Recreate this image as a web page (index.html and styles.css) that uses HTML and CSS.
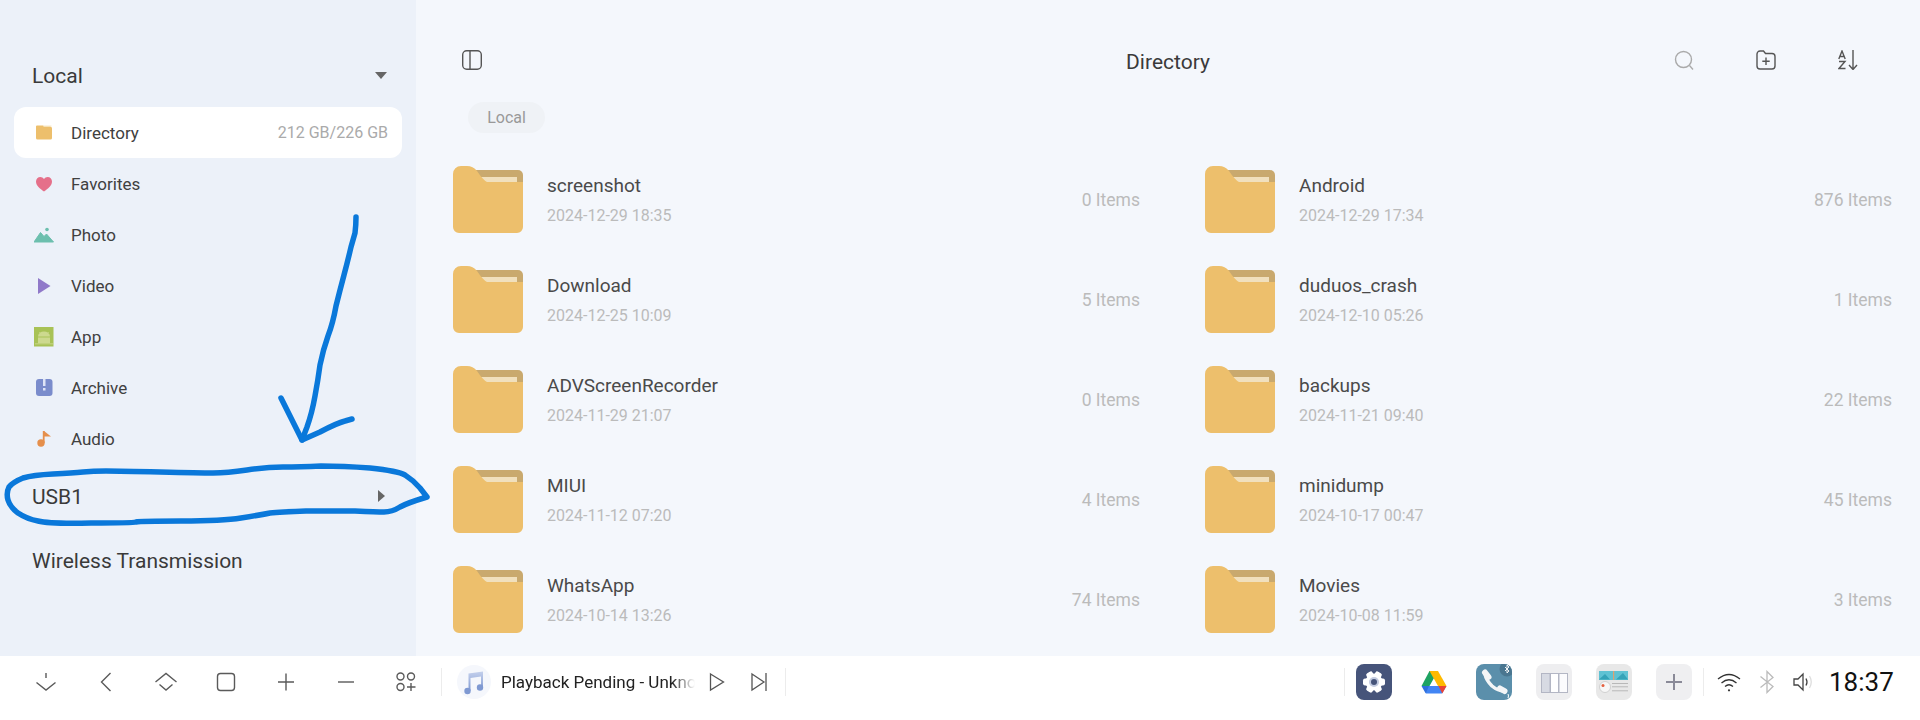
FILE: index.html
```html
<!DOCTYPE html>
<html lang="en">
<head>
<meta charset="utf-8">
<title>Directory</title>
<link rel="stylesheet" href="styles.css">
</head>
<body>
<svg class="defs" width="0" height="0">
  <symbol id="folder" viewBox="0 0 70 67">
    <path d="M15 4H65a5 5 0 0 1 5 5V30H15z" fill="#c9a96e"/>
    <rect x="22" y="11" width="42" height="12" fill="#f1e0bd"/>
    <path d="M0 8a8 8 0 0 1 8-8h6q6 0 10 5q6 9 10 11H70V61a6 6 0 0 1-6 6H6a6 6 0 0 1-6-6z" fill="#edbf6c"/>
  </symbol>
</svg>
<div class="app">
  <div class="content">
    <aside class="sidebar">
      <div class="section"><span>Local</span><i class="tri-down"></i></div>
      <ul class="nav">
        <li class="nav-item active">
          <svg class="nav-icon" viewBox="0 0 20 20"><path d="M2 3.500a1 1 0 0 1 1-1h6l1 1h6a2 2 0 0 1 2 2V15a1.500 1.500 0 0 1-1.500 1.500h-13A1.500 1.500 0 0 1 2 15z" fill="#edbf6c"/><path d="M9 3h8.500" stroke="#f7e3b8" stroke-width=".8"/></svg>
          <span class="nav-label">Directory</span><span class="nav-meta">212 GB/226 GB</span>
        </li>
        <li class="nav-item">
          <svg class="nav-icon" viewBox="0 0 20 20"><path d="M10 17.500C6 14.500 2 11.800 2 7.500C2 5 4 3 6.300 3C7.800 3 9.200 3.700 10 5C10.800 3.700 12.200 3 13.700 3C16 3 18 5 18 7.500C18 11.800 14 14.500 10 17.500z" fill="#e5708a"/></svg>
          <span class="nav-label">Favorites</span>
        </li>
        <li class="nav-item">
          <svg class="nav-icon" viewBox="0 0 20 20"><path d="M0 17L6.500 7.500L10 11.500L12.500 9L19.500 17z" fill="#6cbfae" stroke="#6cbfae" stroke-linejoin="round"/><circle cx="13" cy="4.500" r="1.800" fill="#6cbfae"/></svg>
          <span class="nav-label">Photo</span>
        </li>
        <li class="nav-item">
          <svg class="nav-icon" viewBox="0 0 20 20"><path d="M4 2L16.500 10L4 18z" fill="#9079c9"/></svg>
          <span class="nav-label">Video</span>
        </li>
        <li class="nav-item">
          <svg class="nav-icon" viewBox="0 0 20 20"><rect width="19.500" height="19.500" fill="#a8c256"/><path d="M4 9.500a6 5 0 0 1 12 0z" fill="#cdd98f"/><rect x="4" y="10.500" width="12" height="6" fill="#cdd98f"/><path d="M1 16.800H19" stroke="#c4d380" stroke-width="1.200"/><path d="M5.500 5L7 7M14.500 5L13 7" stroke="#cdd98f"/></svg>
          <span class="nav-label">App</span>
        </li>
        <li class="nav-item">
          <svg class="nav-icon" viewBox="0 0 20 20"><rect x="2" y="1" width="16.500" height="17" rx="3" fill="#7a8ccc"/><rect x="9" y="1" width="2.500" height="7" fill="#dfe5f7"/><rect x="9" y="10" width="2.500" height="2.500" fill="#dfe5f7"/></svg>
          <span class="nav-label">Archive</span>
        </li>
        <li class="nav-item">
          <svg class="nav-icon" viewBox="0 0 20 20"><circle cx="7" cy="14" r="3.700" fill="#e58f4c"/><rect x="8.800" y="2" width="1.800" height="12" fill="#e58f4c"/><path d="M10 2L17 7.500H10z" fill="#e58f4c"/></svg>
          <span class="nav-label">Audio</span>
        </li>
      </ul>
      <div class="section"><span>USB1</span><i class="tri-right"></i></div>
      <div class="section"><span>Wireless Transmission</span></div>
    </aside>
    <main class="main">
      <header class="topbar">
        <svg class="tool" viewBox="0 0 20 20" fill="none" stroke="#555" stroke-width="1.400"><rect x=".7" y=".7" width="18.600" height="18.600" rx="4"/><path d="M8 1V19"/></svg>
        <h1 class="title">Directory</h1>
        <div class="tools">
          <svg class="tool" viewBox="0 0 20 20" fill="none" stroke="#aaa" stroke-width="1.400"><circle cx="9.500" cy="9.500" r="8"/><path d="M15.500 15.500L19 19.500"/></svg>
          <svg class="tool" viewBox="0 0 20 20" fill="none" stroke="#555" stroke-width="1.400"><path d="M1 4a3 3 0 0 1 3-3h3.500l2 2.500H16a3 3 0 0 1 3 3V16a3 3 0 0 1-3 3H4a3 3 0 0 1-3-3z"/><path d="M10 7.500V15M6.300 11.200H13.700"/></svg>
          <svg class="tool" viewBox="0 0 20 20" fill="none" stroke="#555" stroke-width="1.400"><path d="M.8 9L4 1L7.200 9M2 6.500H6"/><path d="M1 11.500H7L1 18.500H7.500"/><path d="M15 0V19M11 15L15 19.500L19 15"/></svg>
        </div>
      </header>
      <div class="crumb">Local</div>
      <section class="files">
        <article class="file"><svg class="file-icon"><use href="#folder"/></svg><div class="file-text"><div class="file-name">screenshot</div><div class="file-date">2024-12-29 18:35</div></div><div class="file-count">0 Items</div></article>
        <article class="file"><svg class="file-icon"><use href="#folder"/></svg><div class="file-text"><div class="file-name">Android</div><div class="file-date">2024-12-29 17:34</div></div><div class="file-count">876 Items</div></article>
        <article class="file"><svg class="file-icon"><use href="#folder"/></svg><div class="file-text"><div class="file-name">Download</div><div class="file-date">2024-12-25 10:09</div></div><div class="file-count">5 Items</div></article>
        <article class="file"><svg class="file-icon"><use href="#folder"/></svg><div class="file-text"><div class="file-name">duduos_crash</div><div class="file-date">2024-12-10 05:26</div></div><div class="file-count">1 Items</div></article>
        <article class="file"><svg class="file-icon"><use href="#folder"/></svg><div class="file-text"><div class="file-name">ADVScreenRecorder</div><div class="file-date">2024-11-29 21:07</div></div><div class="file-count">0 Items</div></article>
        <article class="file"><svg class="file-icon"><use href="#folder"/></svg><div class="file-text"><div class="file-name">backups</div><div class="file-date">2024-11-21 09:40</div></div><div class="file-count">22 Items</div></article>
        <article class="file"><svg class="file-icon"><use href="#folder"/></svg><div class="file-text"><div class="file-name">MIUI</div><div class="file-date">2024-11-12 07:20</div></div><div class="file-count">4 Items</div></article>
        <article class="file"><svg class="file-icon"><use href="#folder"/></svg><div class="file-text"><div class="file-name">minidump</div><div class="file-date">2024-10-17 00:47</div></div><div class="file-count">45 Items</div></article>
        <article class="file"><svg class="file-icon"><use href="#folder"/></svg><div class="file-text"><div class="file-name">WhatsApp</div><div class="file-date">2024-10-14 13:26</div></div><div class="file-count">74 Items</div></article>
        <article class="file"><svg class="file-icon"><use href="#folder"/></svg><div class="file-text"><div class="file-name">Movies</div><div class="file-date">2024-10-08 11:59</div></div><div class="file-count">3 Items</div></article>
      </section>
    </main>
  </div>
  <footer class="dock">
    <div class="nav-keys">
      <svg class="key" viewBox="0 0 20 20"><path d="M10 1V6M.5 10.500L10 18L19.500 10.500"/></svg>
      <svg class="key" viewBox="0 0 20 20"><path d="M14.500 1L5.500 10L14.500 19"/></svg>
      <svg class="key key-wide" viewBox="0 -1 22 20"><path d="M.5 9L11 .5L21.500 9M4.500 11.500L11 17L17.500 11.500"/></svg>
      <svg class="key" viewBox="0 0 20 20"><rect x="1.500" y="1.500" width="17" height="17" rx="3"/></svg>
      <svg class="key" viewBox="0 0 20 20"><path d="M10 1.500V18.500M2 10H18"/></svg>
      <svg class="key" viewBox="0 0 20 20"><path d="M2 10H18"/></svg>
      <svg class="key" viewBox="0 0 20 20"><circle cx="4.500" cy="4.500" r="3.500"/><circle cx="15" cy="4.500" r="3.500"/><circle cx="4.500" cy="15" r="3.500"/><path d="M15 11V19M11 15H19.500"/></svg>
    </div>
    <span class="sep sep-a"></span>
    <div class="player">
      <span class="cover"><svg viewBox="0 0 34 34" width="34" height="34"><defs><linearGradient id="note" x1="0" y1="0" x2="0" y2="1"><stop offset="0" stop-color="#c4d0ec"/><stop offset="1" stop-color="#7f99d2"/></linearGradient></defs><path d="M11.500 8.500L26 6.500V22.500H24V11.500L13.500 13V26H11.500z" fill="url(#note)"/><circle cx="10.500" cy="26" r="3.200" fill="#7f99d2"/><circle cx="23" cy="22.500" r="3.200" fill="#7f99d2"/></svg></span>
      <span class="track">Playback Pending - Unknown</span>
      <svg class="ctl" viewBox="0 0 16 20"><path d="M1.500 2L14.500 10L1.500 18z"/></svg>
      <svg class="ctl" viewBox="0 0 16 20"><path d="M1 2L13 10L1 18zM15 1V19"/></svg>
    </div>
    <span class="sep sep-b"></span>
    <div class="tray">
      <span class="sep"></span>
      <div class="tiles">
        <span class="tile tile-settings"><svg viewBox="0 0 36 36" width="36" height="36"><g fill="#fff"><circle cx="18" cy="18" r="8.500"/><rect x="14.500" y="7" width="7" height="22" rx="2" transform="rotate(30 18 18)"/><rect x="14.500" y="7" width="7" height="22" rx="2" transform="rotate(90 18 18)"/><rect x="14.500" y="7" width="7" height="22" rx="2" transform="rotate(150 18 18)"/></g><circle cx="18" cy="18" r="5" fill="#c3cbe0"/><circle cx="18" cy="18" r="3" fill="#46547a"/></svg></span>
        <span class="tile"><svg viewBox="0 0 36 36" width="36" height="36"><path d="M13.500 7H22L13.500 22H5.500z" fill="#1ea362"/><path d="M13.500 7H22L18 14z" fill="#188038"/><path d="M22 7L30.500 22H22L13.500 7z" fill="#ffba00"/><path d="M10 22H30.500L26 29.500H10z" fill="#4285f4"/><path d="M22.500 22H30.500L26.300 29.500z" fill="#ea4335"/><path d="M5.500 22H13L9.700 29.500z" fill="#2f6fdc"/></svg></span>
        <span class="tile tile-phone"><svg viewBox="0 0 36 36" width="36" height="36"><circle cx="31" cy="5" r="7.500" fill="#4a7690"/><path d="M29 3L33 7L31 9V1L33 3L29 7" fill="none" stroke="#fff" stroke-width=".9"/><g fill="none" stroke="#f3f5f7" stroke-linecap="round"><path d="M9 10Q10 16 16 22Q22 27 28 27" stroke-width="3.500"/><path d="M9 8.500L12.500 13" stroke-width="6"/><path d="M24 24.500L28.500 27" stroke-width="6"/></g><path d="M32 30Q33 32 32 34" fill="none" stroke="#fff"/></svg></span>
        <span class="tile tile-panel"><svg viewBox="0 0 36 36" width="36" height="36"><rect x="5" y="9" width="27" height="20" fill="#b3b6c4"/><rect x="6" y="10" width="7.500" height="18" fill="#d7dae3"/><rect x="15" y="10" width="7" height="18" fill="#fff"/><rect x="23.500" y="10" width="7.500" height="18" fill="#fbfbfd"/></svg></span>
        <span class="tile tile-radio"><svg viewBox="0 0 36 36" width="36" height="36"><rect x="3" y="7" width="29" height="9" fill="#5fc2d3"/><path d="M3 15.500L9 10L14 15.500zM20 15.500L27 9L32 15.500z" fill="#35a3b8"/><rect x="17" y="7" width="1.200" height="9" fill="#e0a070"/><circle cx="9" cy="23" r="5.500" fill="#f7f7f7" stroke="#d0d0d0"/><circle cx="7" cy="21.500" r="1.500" fill="#e5603f"/><path d="M16 19.500H32M16 22.800H32M16 26.800H32" stroke="#b8b8b8"/></svg></span>
        <span class="tile tile-add"><svg viewBox="0 0 36 36" width="36" height="36"><path d="M18 10V26M10 18H26" stroke="#8a8a98" stroke-width="2"/></svg></span>
      </div>
      <span class="sep"></span>
      <svg class="wifi" viewBox="0 0 24 20" fill="none" stroke="#333" stroke-width="1.300"><path d="M1 7Q12-2 23 7M4.500 11Q12 4.500 19.500 11M8 14.500Q12 11 16 14.500"/><circle cx="12" cy="18.300" r="1.100" fill="#333" stroke="none"/></svg>
      <svg class="bt" viewBox="0 0 16 24" fill="none" stroke="#bbb" stroke-width="1.300"><path d="M1.500 6.500L14 16.500L8 22.500V1.500L14 7.500L1.500 17.500"/></svg>
      <svg class="vol" viewBox="0 0 22 20" fill="none" stroke-width="1.300"><path d="M1 7H5L10 2V18L5 13H1z" stroke="#444"/><path d="M13 6.500Q15 10 13 13.500" stroke="#444"/><path d="M16.500 4Q20 10 16.500 16" stroke="#ddd"/></svg>
      <time class="clock">18:37</time>
    </div>
  </footer>
  <svg class="ink" viewBox="0 0 1920 720" width="1920" height="720" fill="none" stroke="#0a78da" stroke-width="5.500" stroke-linecap="round" stroke-linejoin="round">
    <path d="M356 217Q356 225 355 233Q355 233 351 247Q348 260 344 275Q340 290 336 306Q333 323 328 336Q323 350 320 365Q318 380 315 396Q312 413 307 427L302 440"/>
    <path d="M281 398Q286 408 292 420L302 440L320 432Q337 423 345 421L352 419"/>
    <path d="M427 497L420 488Q413 480 405 475Q398 471 370 468Q343 466 321 466Q300 467 283 467Q267 467 247 470Q227 473 213 473Q200 473 160 472Q120 471 106 471Q93 471 83 472Q73 473 53 474Q33 475 23 478Q13 482 9 487Q6 493 8 500Q10 507 18 513Q27 519 38 521Q50 524 91 523Q133 523 136 522Q140 521 181 521Q223 521 241 518Q260 515 270 513Q280 512 306 511Q333 511 355 511Q377 512 384 512Q392 512 400 507Q407 503 427 497"/>
  </svg>
</div>
</body>
</html>
```

FILE: styles.css
```css
* { box-sizing: border-box; }
html, body { margin: 0; padding: 0; }
body { width: 1920px; height: 720px; overflow: hidden; font-family: Roboto, "Liberation Sans", sans-serif; color: #333; background: #fff; }
.defs { position: absolute; }
.app { position: relative; width: 1920px; height: 720px; display: flex; flex-direction: column; }
.content { display: flex; height: 656px; }

.sidebar { width: 416px; padding: 43px 14px 0; background: #ecf1f9; flex: none; }
.section { height: 64px; padding: 2px 15px 0 18px; display: flex; align-items: center; justify-content: space-between; font-size: 21px; color: #3a3a3a; }
.tri-down { width: 0; height: 0; border-left: 6px solid transparent; border-right: 6px solid transparent; border-top: 7px solid #666; margin-top: -2px; }
.tri-right { width: 0; height: 0; border-top: 6px solid transparent; border-bottom: 6px solid transparent; border-left: 7px solid #666; margin: -2px 2px 0 0; }
.nav { list-style: none; margin: 0; padding: 0; }
.nav-item { height: 51px; padding: 0 14px 0 20px; display: flex; align-items: center; font-size: 17px; color: #404040; border-radius: 12px; }
.nav-item.active { background: #fff; }
.nav-icon { width: 20px; height: 20px; margin-right: 17px; flex: none; }
.nav-label { flex: 1; }
.nav-meta { font-size: 16px; color: #aaa; }

.main { flex: 1; padding: 40px 28px 0 37px; background: #f4f7fc; }
.topbar { height: 40px; display: grid; grid-template-columns: 1fr auto 1fr; align-items: center; padding: 0 18px 0 9px; }
.tool { width: 20px; height: 20px; display: block; }
.title { margin: 3px 0 0; font-size: 21px; font-weight: 400; color: #3a3a3a; }
.tools { display: flex; gap: 62px; justify-content: flex-end; padding-right: 16px; }
.crumb { width: 77px; height: 31px; margin: 22px 0 17px 15px; border-radius: 16px; background: #eff2f6; color: #999; font-size: 16px; display: flex; align-items: center; justify-content: center; }
.files { display: grid; grid-template-columns: 687px 687px; column-gap: 65px; grid-auto-rows: 100px; }
.file { display: flex; align-items: center; }
.file-icon { width: 70px; height: 67px; margin: 0 24px 1px 0; flex: none; }
.file-text { flex: 1; }
.file-name { font-size: 19px; color: #4a4a4a; line-height: 24px; margin-top: -1px; }
.file-date { font-size: 16px; color: #bbb; line-height: 20px; margin-top: 8px; }
.file-count { font-size: 17.500px; color: #bbb; }

.dock { height: 64px; display: flex; align-items: center; padding: 0 26px 12px 36px; background: #fff; flex: none; }
.nav-keys { display: flex; gap: 40px; }
.key { width: 20px; height: 20px; display: block; fill: none; stroke: #5a5a5a; stroke-width: 1.400; }
.key-wide { width: 22px; margin: 0 -1px; }
.sep { width: 1px; height: 28px; background: #ececec; flex: none; }
.sep-a { margin-left: 25px; }
.player { display: flex; align-items: center; margin-left: 15px; }
.cover { width: 34px; height: 34px; border-radius: 50%; background: #f5f7fc; display: block; }
.cover svg { display: block; }
.track { width: 194px; margin-left: 10px; font-size: 17px; color: #222; white-space: nowrap; overflow: hidden; -webkit-mask-image: linear-gradient(90deg, #000 88%, transparent); mask-image: linear-gradient(90deg, #000 88%, transparent); }
.ctl { width: 16px; height: 20px; fill: none; stroke: #555; stroke-width: 1.300; display: block; margin-left: 14px; }
.ctl + .ctl { margin-left: 26px; }
.sep-b { margin-left: 18px; }
.tray { margin-left: auto; display: flex; align-items: center; }
.tiles { display: flex; gap: 24px; margin: 0 11px; }
.tile { width: 36px; height: 36px; border-radius: 8px; display: block; overflow: hidden; }
.tile svg { display: block; }
.tile-settings { background: #46547a; }
.tile-phone { background: #5b8fab; }
.tile-panel { background: #eeeef0; }
.tile-radio { background: #e8e8e8; }
.tile-add { background: #efeff1; }
.wifi { width: 24px; height: 20px; margin-left: 13px; }
.bt { width: 16px; height: 24px; margin-left: 18px; }
.vol { width: 22px; height: 20px; margin-left: 18px; }
.clock { width: 65px; margin-left: 14px; font-size: 26px; color: #111; }

.ink { position: absolute; left: 0; top: 0; pointer-events: none; }
```
